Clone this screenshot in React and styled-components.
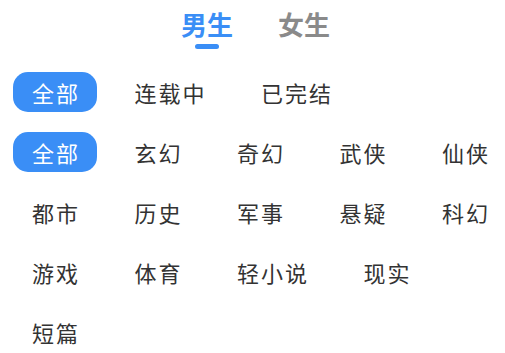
import React from "react";
import styled, { createGlobalStyle } from "styled-components";

const GlobalStyle = createGlobalStyle`
  html, body {
    margin: 0;
    padding: 0;
    background: #ffffff;
  }
  body {
    font-family: "Noto Sans CJK SC", "Noto Sans", sans-serif;
  }
`;

const Page = styled.div`
  width: 505px;
  height: 353px;
  overflow: hidden;
  background: #fff;
`;

const Tabs = styled.div`
  display: flex;
  justify-content: center;
  gap: 45px;
  padding-top: 9px;
  padding-left: 6px;
`;

const Tab = styled.div`
  display: flex;
  flex-direction: column;
  align-items: center;
  cursor: pointer;
`;

const TabLabel = styled.span`
  font-size: 26px;
  line-height: 30px;
  font-weight: 700;
  color: ${(p) => (p.active ? "#3a8ef6" : "#8a8a8a")};
`;

const Indicator = styled.span`
  margin-top: 5px;
  width: 24px;
  height: 5px;
  border-radius: 3px;
  background: ${(p) => (p.active ? "#3a8ef6" : "transparent")};
`;

const Filters = styled.div`
  display: flex;
  flex-direction: column;
  gap: 20px;
  margin-top: 23px;
  padding-left: 13px;
`;

const Group = styled.div`
  width: 496px;
  display: flex;
  flex-wrap: wrap;
  column-gap: 18.5px;
  row-gap: 20px;
`;

const Chip = styled.div`
  height: 40px;
  display: flex;
  align-items: center;
  padding: 0 17px 0 19px;
  border-radius: 15px;
  font-size: 22px;
  letter-spacing: 2px;
  white-space: nowrap;
  color: ${(p) => (p.active ? "#ffffff" : "#333333")};
  background: ${(p) => (p.active ? "#3a8ef6" : "transparent")};
`;

const status = ["全部", "连载中", "已完结"];
const genres = [
  "全部", "玄幻", "奇幻", "武侠", "仙侠",
  "都市", "历史", "军事", "悬疑", "科幻",
  "游戏", "体育", "轻小说", "现实",
  "短篇",
];

const App = () => {
  return (
    <Page>
      <GlobalStyle />
      <Tabs>
        <Tab>
          <TabLabel active>男生</TabLabel>
          <Indicator active />
        </Tab>
        <Tab>
          <TabLabel>女生</TabLabel>
          <Indicator />
        </Tab>
      </Tabs>
      <Filters>
        <Group>
          {status.map((s, i) => (
            <Chip key={s} active={i === 0}>{s}</Chip>
          ))}
        </Group>
        <Group>
          {genres.map((g, i) => (
            <Chip key={g + i} active={i === 0}>{g}</Chip>
          ))}
        </Group>
      </Filters>
    </Page>
  );
};

export default App;
